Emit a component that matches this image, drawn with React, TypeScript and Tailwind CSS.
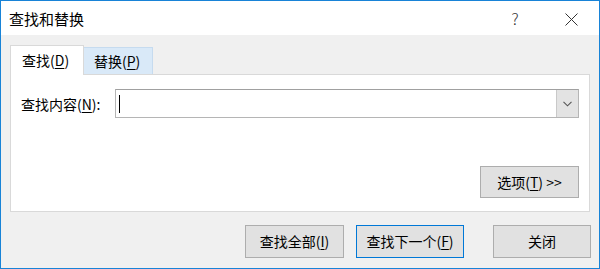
export default function App() {
  const font = { fontFamily: '"Noto Sans CJK SC", "Noto Sans", sans-serif' }
  return (
    <div
      className="w-[600px] h-[269px] border border-[#1883d7] bg-[#f0f0f0] flex flex-col text-[14px] text-black overflow-hidden"
      style={font}
    >
      {/* title bar */}
      <div className="h-[34px] bg-white flex items-center flex-none">
        <div className="pl-[8px] text-[15px] leading-none">查找和替换</div>
        <div className="flex-1" />
        <div className="w-[30px] flex justify-center text-[16px] font-light text-[#333] leading-none">?</div>
        <div className="w-[26px]" />
        <div className="w-[30px] flex justify-center pt-[2px]">
          <svg width="13" height="13" viewBox="0 0 13 13">
            <path d="M0.5 0.5 L12.5 12.5 M12.5 0.5 L0.5 12.5" stroke="#333" strokeWidth="1" fill="none" />
          </svg>
        </div>
        <div className="w-[13px]" />
      </div>

      {/* body */}
      <div className="flex-1 flex flex-col px-[9px] pt-[10px] pb-[9px]">
        {/* tabs */}
        <div className="flex items-end h-[29px] relative z-10">
          <div className="w-[74px] h-[30px] -mb-[1px] bg-white border border-b-0 border-[#d9d9d9] flex items-center pl-[11px]">
            查找(<u className="underline-offset-2">D</u>)
          </div>
          <div className="w-[69px] h-[27px] bg-[#d9e9f8] border border-b-0 border-l-0 border-[#c6dbef] flex items-center pl-[10px]">
            替换(<u className="underline-offset-2">P</u>)
          </div>
        </div>

        {/* panel */}
        <div className="h-[138px] bg-white border border-[#d9d9d9] flex flex-col px-[10px] pt-[14px] pb-[13px]">
          <div className="flex items-center h-[29px]">
            <div className="w-[94px] pt-[1px]">
              查找内容(<u className="underline-offset-2">N</u>):
            </div>
            <div className="flex-1 h-[29px] border border-[#b5b5b5] border-t-[#a0a0a0] flex items-stretch">
              <div className="flex-1 flex items-center pl-[3px]">
                <span className="w-px h-[18px] bg-black" />
              </div>
              <div className="w-[22px] bg-[#e3e3e3] border-l border-[#c9c9c9] flex items-center justify-center">
                <svg width="9" height="6" viewBox="0 0 9 6">
                  <path d="M0.5 0.8 L4.5 4.8 L8.5 0.8" stroke="#555" strokeWidth="1.1" fill="none" />
                </svg>
              </div>
            </div>
          </div>
          <div className="flex-1" />
          <div className="flex justify-end">
            <div className="w-[99px] h-[32px] bg-[#e1e1e1] border border-[#adadad] flex items-center justify-center">
              选项(<u className="underline-offset-2">T</u>) &gt;&gt;
            </div>
          </div>
        </div>

        {/* buttons */}
        <div className="flex justify-end mt-[13px] h-[33px]">
          <div className="w-[99px] bg-[#e1e1e1] border border-[#adadad] flex items-center justify-center">
            查找全部(<u className="underline-offset-2">I</u>)
          </div>
          <div className="w-[108px] ml-[12px] bg-[#e1e1e1] border border-[#0078d7] flex items-center justify-center">
            查找下一个(<u className="underline-offset-2">F</u>)
          </div>
          <div className="w-[98px] ml-[29px] -mr-[1px] bg-[#e1e1e1] border border-[#adadad] flex items-center justify-center">
            关闭
          </div>
        </div>
      </div>
    </div>
  )
}
